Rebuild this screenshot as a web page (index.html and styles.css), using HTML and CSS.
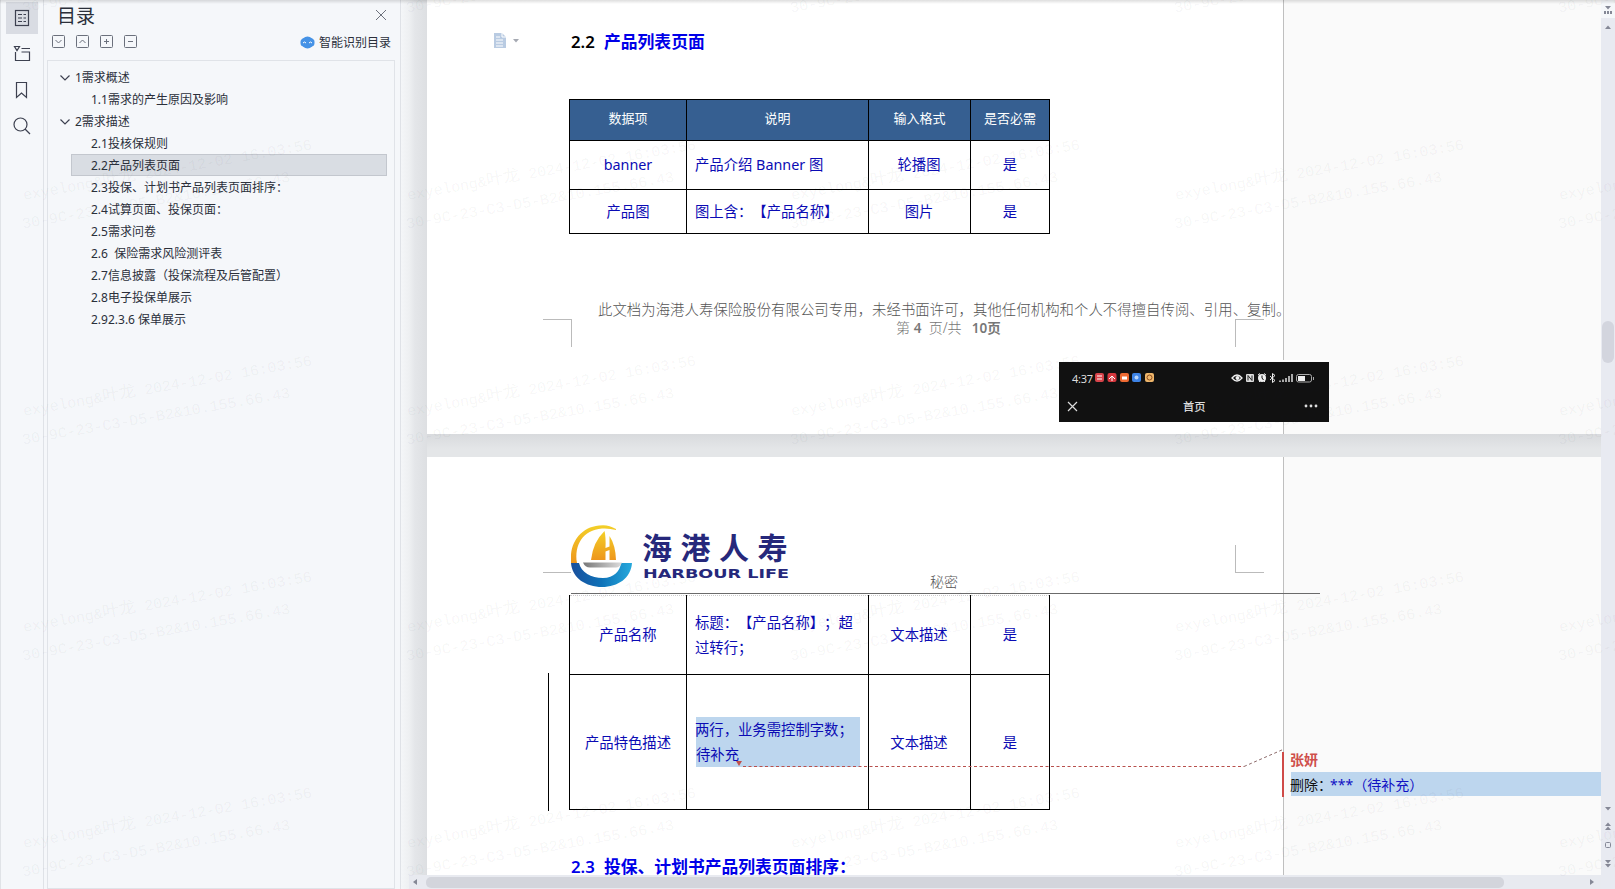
FILE: index.html
```html
<!DOCTYPE html>
<html lang="zh-CN">
<head>
<meta charset="utf-8">
<title>目录</title>
<link rel="stylesheet" href="styles.css">
</head>
<body>
<div class="app">
  <nav class="rail">
    <div class="rail-btn active"><svg width="32" height="32" viewBox="0 0 32 32"><rect x="9.5" y="8.5" width="13" height="15"/><path d="M12 12.5h4M17.500 12.500h2.500M12 16h4M17.500 16h2.500M12 19.500h4M17.500 19.500h2.500"/></svg></div>
    <div class="rail-btn"><svg width="32" height="32" viewBox="0 0 32 32"><path d="M8.500 8.500h5l-2.500 4zM15.500 10.500h8.500M9.500 14v8.500h14v-8.500h-8"/></svg></div>
    <div class="rail-btn"><svg width="32" height="32" viewBox="0 0 32 32"><path d="M10.500 8.500h10v15l-5-4.500-5 4.500z"/></svg></div>
    <div class="rail-btn"><svg width="32" height="32" viewBox="0 0 32 32"><circle cx="14.500" cy="14.500" r="6.500"/><path d="M19 19l5 5"/></svg></div>
  </nav>
  <aside class="toc">
    <header class="toc-head">
      <h1>目录</h1>
      <svg class="close" width="12" height="12" viewBox="0 0 12 12"><path d="M1 1l10 10M11 1L1 11"/></svg>
    </header>
    <div class="toc-tools">
      <svg width="13" height="13" viewBox="0 0 13 13"><rect x=".5" y=".5" width="12" height="12" rx="1"/><path d="M3.500 5l3 3 3-3"/></svg>
      <svg width="13" height="13" viewBox="0 0 13 13"><rect x=".5" y=".5" width="12" height="12" rx="1"/><path d="M3.500 8l3-3 3 3"/></svg>
      <svg width="13" height="13" viewBox="0 0 13 13"><rect x=".5" y=".5" width="12" height="12" rx="1"/><path d="M4 6.500h5M6.500 4v5"/></svg>
      <svg width="13" height="13" viewBox="0 0 13 13"><rect x=".5" y=".5" width="12" height="12" rx="1"/><path d="M4 6.500h5"/></svg>
      <div class="smart"><svg class="bot" width="15" height="13" viewBox="0 0 15 13"><ellipse cx="7.500" cy="6.500" rx="6" ry="6"/><rect x=".5" y="2.500" width="14" height="8" rx="3.500"/><path d="M3 7l1.500-1L6 7M9 7l1.500-1L12 7"/></svg><span>智能识别目录</span></div>
    </div>
    <ul class="tree">
      <li class="l1"><svg width="10" height="6" viewBox="0 0 10 6"><path d="M.5.5L5 5 9.500.5"/></svg>1需求概述</li>
      <li>1.1需求的产生原因及影响</li>
      <li class="l1"><svg width="10" height="6" viewBox="0 0 10 6"><path d="M.5.5L5 5 9.500.5"/></svg>2需求描述</li>
      <li>2.1投核保规则</li>
      <li class="sel">2.2产品列表页面</li>
      <li>2.3投保、计划书产品列表页面排序：</li>
      <li>2.4试算页面、投保页面：</li>
      <li>2.5需求问卷</li>
      <li>2.6  保险需求风险测评表</li>
      <li>2.7信息披露（投保流程及后管配置）</li>
      <li>2.8电子投保单展示</li>
      <li>2.92.3.6 保单展示</li>
    </ul>
  </aside>
  <main class="doc">
    <section class="page page-a">
      <div class="sheet">
        <svg class="para" width="28" height="18" viewBox="0 0 28 18"><path class="file" d="M1 1h8l4 4v11H1z"/><path class="rule" d="M3 5h4M3 8h7M3 11h7M3 14h7M9 1v4h4"/><path class="drop" d="M20 7h6l-3 3.500z"/></svg>
        <h2 class="black"><b>2.2</b>产品列表页面</h2>
        <table class="top">
          <colgroup><col class="c1"><col class="c2"><col class="c3"><col class="c4"></colgroup>
          <tr class="h41"><th>数据项</th><th>说明</th><th>输入格式</th><th>是否必需</th></tr>
          <tr class="h49"><td>banner</td><td class="left">产品介绍 Banner 图</td><td>轮播图</td><td>是</td></tr>
          <tr class="h44"><td>产品图</td><td class="left">图上含：【产品名称】</td><td>图片</td><td>是</td></tr>
        </table>
        <p class="notice">此文档为海港人寿保险股份有限公司专用，未经书面许可，其他任何机构和个人不得擅自传阅、引用、复制。</p>
        <p class="pageno">第 <b>4</b>&nbsp; 页/共 &nbsp;<b class="total">10页</b></p>
        <i class="mark bl"></i><i class="mark br"></i>
      </div>
      <div class="phone">
        <div class="status">
          <span>4:37</span>
          <svg width="60" height="10" viewBox="0 0 60 10"><rect x="0" width="9" height="9" rx="2" fill="#d8444b"/><path d="M2 3h5M2 6h5" stroke="#fff"/><rect x="12.500" width="9" height="9" rx="2" fill="#d6383e"/><path d="M14 6l3-3 3 3M17 3v5" stroke="#fff" fill="none"/><rect x="25" width="9" height="9" rx="2" fill="#ee6a32"/><path d="M27 5h5" stroke="#fff" stroke-width="3"/><rect x="37" width="9" height="9" rx="2" fill="#3d83e6"/><circle cx="41.500" cy="4.500" r="2" fill="#b8d4fa"/><rect x="50" width="9" height="9" rx="2" fill="#eeb66b"/><circle cx="54.500" cy="4.500" r="2.500" fill="none" stroke="#8c4d20"/></svg>
          <svg class="sys" width="84" height="12" viewBox="0 0 84 12"><path d="M1 6q5-6 10 0q-5 6-10 0z" fill="none" stroke="#eee" stroke-width="1.300"/><circle cx="6.500" cy="6" r="2" fill="#eee"/><rect x="15" y="2" width="8" height="8" rx="1" fill="#ddd"/><path d="M17 8.500v-5l4 5v-5" stroke="#222" fill="none"/><circle cx="31" cy="6" r="4" fill="#eee"/><path d="M31 3.500V6l1.500 2" stroke="#111" fill="none"/><path d="M27 3l2-1.500M35 3l-2-1.500M28 10l1-1M34 10l-1-1" stroke="#eee"/><path d="M39 4l5 4.500-2.500 2v-9l2.500 2L39 8" stroke="#eee" fill="none"/><path d="M49 10V8.500M52 10V7.500M55 10V6M58 10V4M61 10V2" stroke="#ddd" stroke-width="1.500"/><rect x="65.500" y="2.500" width="15" height="7.500" rx="2" fill="none" stroke="#aaa"/><rect x="67" y="4" width="7" height="5" fill="#eee"/><path d="M82.500 5v3" stroke="#aaa"/></svg>
        </div>
        <div class="nav">
          <svg width="11" height="11" viewBox="0 0 11 11"><path d="M1 1l9 9M10 1L1 10" stroke="#ddd" stroke-width="1.200"/></svg>
          <span>首页</span>
          <svg width="14" height="4" viewBox="0 0 14 4" fill="#ddd"><circle cx="2" cy="2" r="1.400"/><circle cx="7" cy="2" r="1.400"/><circle cx="12" cy="2" r="1.400"/></svg>
        </div>
      </div>
    </section>
    <section class="page page-b">
      <div class="sheet">
        <i class="mark tl"></i><i class="mark tr"></i>
        <div class="letterhead">
          <svg width="62" height="64" viewBox="0 0 62 64">
            <defs>
              <linearGradient id="gold" x1="0" y1="0" x2="0" y2="1"><stop offset="0" stop-color="#f3d028"/><stop offset="1" stop-color="#ee961c"/></linearGradient>
              <linearGradient id="sea" x1="0" y1="0" x2="1" y2="0"><stop offset="0" stop-color="#1a4f9c"/><stop offset=".5" stop-color="#0e72b8"/><stop offset="1" stop-color="#27a9dc"/></linearGradient>
              <linearGradient id="hull" x1="0" y1="0" x2="1" y2="0"><stop offset="0" stop-color="#777"/><stop offset="1" stop-color="#ddd"/></linearGradient>
            </defs>
            <path d="M45 5Q37 0 28 1.500C11 3 0 17 0 33v6h6C3 21 12 6 31 4.500Q38 4 45 6z" fill="url(#gold)"/>
            <path d="M0 39h8c2 9 12 15 24 15 11 0 17-7 18-15h11c-1 15-14 24-30 24S1 54 0 39z" fill="url(#sea)"/>
            <path d="M20 36Q22 18 33.500 7Q35 13 34.500 24l4-1.500V12q6 9 6.500 24h-6.500V26l-4 1.500V36z" fill="url(#gold)"/>
            <path d="M12 38.500h39q-2 5-6 5H19q-5 0-7-5z" fill="url(#hull)"/>
          </svg>
          <div class="brand">
            <span class="cn">海港人寿</span>
            <svg width="148" height="13" viewBox="0 0 148 13"><text class="en" x="0" y="10.500" textLength="146" lengthAdjust="spacingAndGlyphs">HARBOUR LIFE</text></svg>
          </div>
          <span class="secret">秘密</span>
        </div>
        <table class="cont">
          <colgroup><col class="c1"><col class="c2"><col class="c3"><col class="c4"></colgroup>
          <tr class="h79"><td>产品名称</td><td class="left">标题：【产品名称】；超<br>过转行；</td><td>文本描述</td><td>是</td></tr>
          <tr class="h135"><td>产品特色描述</td><td class="left"><div class="picked">两行，业务需控制字数；<br>待补充</div></td><td>文本描述</td><td>是</td></tr>
        </table>
        <h2 class="blue"><b>2.3</b>投保、计划书产品列表页面排序：</h2>
        <i class="change"></i>
      </div>
      <div class="comment">
        <div class="author">张妍</div>
        <div class="body"><span>删除：</span>***（待补充）</div>
      </div>
      <svg class="leader" width="560" height="24" viewBox="0 0 560 24"><path d="M1 14h6l-3 5z" fill="#c0504d"/><path d="M8 19.500h501" class="dash"/><path d="M509 19.500l39-17" class="dash grey"/></svg>
    </section>
    <footer class="hscroll"><i class="arrow-l"></i><i class="hthumb"></i><i class="arrow-r"></i></footer>
  </main>
  <div class="vscroll">
    <svg class="split" width="14" height="18" viewBox="0 0 14 18"><path d="M4 6h6l-3 3.500zM3 11h2v3H3zM6 11h2v3H6zM9 11h2v3H9z"/></svg>
    <svg class="up" width="14" height="18" viewBox="0 0 14 18"><path d="M4 11l3-3.500 3 3.500z"/></svg>
    <i class="vthumb"></i>
    <svg class="down" width="14" height="72" viewBox="0 0 14 72"><path d="M4 7h6l-3 3.500zM4 26l3-3.500 3 3.500zM4 30l3-3.500 3 3.500zM4 60h6l-3 3.500zM4 64h6l-3 3.500z"/><rect x="4.500" y="42.500" width="5" height="5" rx="1"/></svg>
  </div>
</div>
<svg class="watermark" width="1615" height="889">
  <defs>
    <g id="wm"><g transform="rotate(-10)"><text x="0" y="0" textLength="293">exyelong&amp;<tspan class="han">叶龙</tspan> 2024-12-02 16:03:56</text><text x="-6" y="28" textLength="272">30-9C-23-C3-D5-B2&amp;10.155.66.43</text></g></g>
    <g id="wmrow"><use href="#wm" x="24"/><use href="#wm" x="408"/><use href="#wm" x="792"/><use href="#wm" x="1176"/><use href="#wm" x="1560"/></g>
  </defs>
  <use href="#wmrow" y="-16"/><use href="#wmrow" y="200"/><use href="#wmrow" y="416"/><use href="#wmrow" y="632"/><use href="#wmrow" y="848"/>
</svg>
<div class="topshade"></div>
</body>
</html>
```

FILE: styles.css
```css
* { box-sizing: border-box; }
body { margin: 0; font-family: "Noto Sans", "Noto Sans CJK SC", sans-serif; color: #2b2f3a; background: #f5f7fa; overflow: hidden; text-spacing-trim: space-all; }
.app { display: flex; width: 1615px; height: 889px; }
svg { display: block; flex: none; }

.rail { width: 44px; border-left: 1px solid #e0e3e7; border-right: 1px solid #dfe2e7; padding: 2px 0 0 5px; display: flex; flex-direction: column; gap: 4px; }
.rail-btn { width: 32px; height: 32px; }
.rail-btn.active { background: #d9dce3; }
.rail svg { fill: none; stroke: #3d4150; stroke-width: 1.2; }

.toc { width: 357px; border-right: 1px solid #dfe2e7; padding: 0 5px 0 3px; display: flex; flex-direction: column; }
.toc-head { height: 30px; display: flex; align-items: center; justify-content: space-between; padding: 0 8px 1px 10px; }
.toc-head h1 { margin: 0; font-size: 19px; font-weight: 400; line-height: 28px; font-family: "Noto Sans CJK SC", sans-serif; }
.close { fill: none; stroke: #6d717c; }
.toc-tools { height: 30px; display: flex; align-items: center; gap: 11px; padding: 0 4px 7px 5px; }
.toc-tools > svg { fill: none; stroke: #6b707c; }
.smart { margin-left: auto; display: flex; align-items: center; gap: 4px; font-size: 12px; line-height: 16px; padding-top: 2px; }
.bot { fill: #4592e6; }
.bot path { fill: none; stroke: #fff; }
.tree { flex: 1; margin: 0; padding: 5px 7px 0 23px; list-style: none; border: 1px solid #e0e3e8; font-size: 12px; }
.tree li { height: 22px; line-height: 21px; padding-left: 19px; border: 1px solid transparent; white-space: pre; }
.tree .l1 { margin-left: -12px; padding: 1px 0 0; display: flex; align-items: center; gap: 5px; }
.tree .l1 svg { fill: none; stroke: #3d4150; stroke-width: 1.200; }
.tree .sel { background: #d9dde3; border-color: #c3c7ce; }

.doc { width: 1200px; padding-left: 26px; display: flex; flex-direction: column; background: linear-gradient(90deg, #f4f6f8 0, #eef0f2 8px, #e4e6e9 14px, #dddfe2 26px, #e4e6e8 27px); }
.page { position: relative; background: #fafafa; width: 1174px; }
.page-a { height: 434px; }
.page-b { height: 418px; margin-top: 23px; }
.page-a::after { content: ""; position: absolute; left: 0; right: 0; top: 434px; height: 23px; background: linear-gradient(#d8dadd, #e4e6e8 15px); }
.sheet { position: relative; width: 857px; height: 100%; background: #fff; border-right: 1px solid #bfbfbf; padding-left: 142px; display: flow-root; }
.para { position: absolute; left: 66px; top: 32px; }
.file { fill: #b9cbe2; }
.rule { stroke: #fff; fill: none; }
.drop { fill: #a5a9b2; }
h2 { margin: 0; padding-left: 2px; font-size: 16.800px; line-height: 24px; color: #0000e8; white-space: nowrap; }
h2 b { display: inline-block; width: 33px; font-weight: 600; }
.black { margin-top: 30px; }
.black b { color: #000; }
.blue { margin-top: 49px; line-height: 16px; }
table { border-collapse: collapse; table-layout: fixed; width: 480px; color: #0b0bb4; font-size: 14.350px; line-height: 25px; }
.top { margin-top: 45px; }
.c1 { width: 117px; } .c2 { width: 182px; } .c3 { width: 102px; } .c4 { width: 79px; }
th, td { border: 1px solid #000; padding: 0; text-align: center; white-space: nowrap; }
th { background: #365f91; color: #fff; font-weight: 400; font-size: 13px; padding-bottom: 3px; }
.h49 td, .h79 td { padding-bottom: 1px; }
td:nth-child(3) { padding-right: 1px; }
td.left { text-align: left; padding-left: 8px; }
.h41 { height: 41px; } .h49 { height: 49px; } .h44 { height: 44px; } .h79 { height: 79px; } .h135 { height: 135px; }
.notice { margin: 65px 0 0 29px; font: 300 14.350px/19px "Noto Sans CJK SC", sans-serif; letter-spacing: .08px; color: #555; white-space: nowrap; }
.pageno { margin: 1px 0 0 327px; font-size: 14px; line-height: 18px; color: #777; font-weight: 300; white-space: nowrap; }
.pageno b { font-weight: 600; font-size: 13.500px; }
.pageno .total { margin-left: 3px; }
.mark { position: absolute; width: 29px; height: 28px; border: 0 solid #bbb; }
.bl { left: 116px; top: 319px; border-width: 1px 1px 0 0; }
.br { left: 808px; top: 319px; border-width: 1px 0 0 1px; }
.tl { left: 116px; top: 88px; border-width: 0 1px 1px 0; }
.tr { left: 808px; top: 88px; border-width: 0 0 1px 1px; }

.phone { position: absolute; left: 632px; top: 362px; width: 270px; height: 60px; background: #111; color: #ddd; display: flex; flex-direction: column; padding: 6px 11px 0 8px; box-shadow: 0 -2px 0 #fff; }
.status { display: flex; align-items: center; height: 20px; font-size: 11px; padding-left: 5px; }
.status span { width: 23px; letter-spacing: -.3px; }
.status .sys { margin-left: 76px; }
.nav { display: flex; align-items: center; height: 34px; padding-top: 2px; font-size: 11.300px; font-weight: 500; }
.nav span { margin: 0 auto 0 105px; }

.letterhead { position: relative; width: 749px; height: 69px; margin: 68px 0 0 2px; border-bottom: 1px solid #6b6b6b; display: flex; align-items: flex-end; }
.letterhead > svg { margin-bottom: 5px; background: #fff; }
.brand { width: 148px; margin-left: 10px; padding-bottom: 13px; display: flex; flex-direction: column; color: #26287b; }
.cn { font: 700 30px/30px "Noto Sans CJK SC", sans-serif; letter-spacing: 8.500px; white-space: nowrap; margin: 0 -9px 6px -1px; }
.en { font: 700 12px "DejaVu Sans", sans-serif; fill: #26287b; }
.secret { margin-left: 139px; font: 300 14px/20px "Noto Sans CJK SC", sans-serif; color: #555; padding-bottom: 2px; }
.cont { margin-top: 1px; }
.cont tr:first-child td { border-top: 1px dotted #ccc; }
.picked { background: #bdd6ee; width: 164px; margin-left: 1px; height: 50px; line-height: 25px; text-indent: -1px; }
.change { position: absolute; left: 121px; top: 216px; width: 1px; height: 138px; background: #000; }
.comment { position: absolute; left: 855px; top: 295px; width: 319px; height: 45px; border-left: 2px solid #cf4a47; padding-left: 7px; white-space: nowrap; }
.author { color: #cf4f4b; font-size: 14px; font-weight: 600; line-height: 16px; height: 20px; margin-left: -1px; }
.body { background: #bdd6ee; height: 24px; line-height: 25px; font-size: 14px; color: #1111c4; }
.body span { color: #111; margin-left: -1px; display: inline-block; width: 40px; }
.leader { position: absolute; left: 308px; top: 290px; }
.dash { fill: none; stroke: #b8504d; stroke-dasharray: 3 2.500; }
.grey { stroke: #8c6a6a; }

.hscroll { position: relative; height: 14px; margin-left: -18px; background: #e8eaf0; display: flex; align-items: center; width: 1192px; padding-left: 4px; }
.hthumb { width: 1078px; height: 11px; border-radius: 5px; background: #d3d5dc; margin: 0 86px 0 9px; }
.arrow-l, .arrow-r { border: 3px solid transparent; }
.arrow-l { border-right: 4px solid #858896; border-left: 0; }
.arrow-r { border-left: 4px solid #858896; border-right: 0; }
.vscroll { width: 14px; background: #e8eaf1; display: flex; flex-direction: column; align-items: center; }
.vscroll svg { fill: #858896; }
.vscroll rect { fill: none; stroke: #858896; }
.vscroll .split { background: #f5f7fa; }
.vthumb { width: 12px; height: 42px; border-radius: 6px; background: #d3d5de; margin-top: 285px; }
.down { margin-top: 437px; }

.watermark { position: absolute; left: 0; top: 0; fill: rgba(40, 40, 50, .05); font: 15.200px "Liberation Mono", monospace; pointer-events: none; }
.watermark text { white-space: pre; }
.han { font: 17px "Noto Sans CJK SC", sans-serif; }
.topshade { position: absolute; left: 0; top: 0; width: 1615px; height: 4px; background: linear-gradient(rgba(0, 0, 0, .13), rgba(0, 0, 0, 0)); }
```
